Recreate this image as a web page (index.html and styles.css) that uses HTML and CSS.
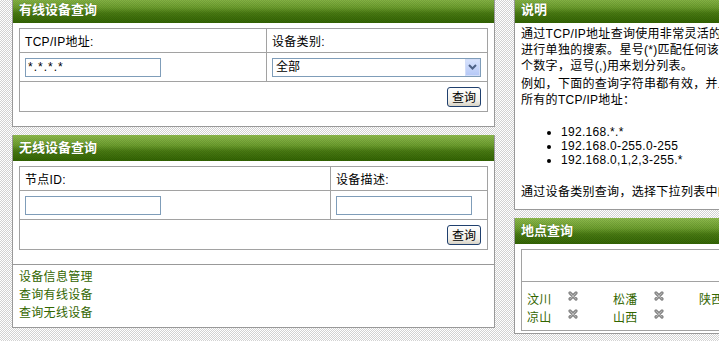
FILE: index.html
```html
<!DOCTYPE html>
<html lang="zh-CN">
<head>
    <meta charset="UTF-8">
    <title>设备查询</title>
    <link rel="stylesheet" href="styles.css">
</head>
<body>
    <div class="page">
        <div class="col-left">
            <div class="panel">
                <div class="panel-head">有线设备查询</div>
                <div class="panel-body">
                    <table class="query">
                        <tr class="row-label">
                            <td class="wired-a">TCP/IP地址:</td>
                            <td>设备类别:</td>
                        </tr>
                        <tr class="row-field">
                            <td><input class="text" type="text" value="*.*.*.*"></td>
                            <td>
                                <div class="select-box">
                                    <select class="select"><option>全部</option></select>
                                    <span class="select-arrow">
                                        <svg width="9" height="6" viewBox="0 0 9 6"><path d="M1 1L4.5 4.5L8 1" fill="none" stroke="#4d6185" stroke-width="2"/></svg>
                                    </span>
                                </div>
                            </td>
                        </tr>
                        <tr class="row-action">
                            <td colspan="2" class="actions"><button class="btn">查询</button></td>
                        </tr>
                    </table>
                </div>
            </div>

            <div class="panel">
                <div class="panel-head">无线设备查询</div>
                <div class="panel-body">
                    <table class="query">
                        <tr class="row-label">
                            <td class="wireless-a">节点ID:</td>
                            <td>设备描述:</td>
                        </tr>
                        <tr class="row-field">
                            <td><input class="text" type="text"></td>
                            <td><input class="text" type="text"></td>
                        </tr>
                        <tr class="row-action">
                            <td colspan="2" class="actions"><button class="btn">查询</button></td>
                        </tr>
                    </table>
                </div>
                <div class="links">
                    <a href="#">设备信息管理</a>
                    <a href="#">查询有线设备</a>
                    <a href="#">查询无线设备</a>
                </div>
            </div>
        </div>

        <div class="col-right">
            <div class="panel">
                <div class="panel-head">说明</div>
                <div class="panel-body help">
                    <p>通过TCP/IP地址查询使用非常灵活的方式，可以对地址的每一段<br>进行单独的搜索。星号(*)匹配任何该段的值，连字符(-)指定一个范围的<br>个数字，逗号(,)用来划分列表。</p>
                    <p>例如，下面的查询字符串都有效，并且可以匹配<br>所有的TCP/IP地址：</p>
                    <ul>
                        <li>192.168.*.*</li>
                        <li>192.168.0-255.0-255</li>
                        <li>192.168.0,1,2,3-255.*</li>
                    </ul>
                    <p class="last">通过设备类别查询，选择下拉列表中的设备类型即可。</p>
                </div>
            </div>

            <div class="panel">
                <div class="panel-head">地点查询</div>
                <div class="panel-body loc-body">
                    <table class="loc">
                        <tr><td class="loc-empty"></td></tr>
                        <tr>
                            <td class="loc-cell">
                                <div class="loc-grid">
                                    <div class="loc-item"><a href="#">汶川</a><span class="del"><svg width="10" height="10" viewBox="0 0 10 10"><path d="M2 2L8 8M8 2L2 8" stroke="#8a8a8a" stroke-width="3.2" stroke-linecap="round"/><path d="M2.5 2.5L7.5 7.5M7.5 2.5L2.5 7.5" stroke="#c4c4c4" stroke-width="0.8" stroke-linecap="round"/></svg></span></div>
                                    <div class="loc-item"><a href="#">松潘</a><span class="del"><svg width="10" height="10" viewBox="0 0 10 10"><path d="M2 2L8 8M8 2L2 8" stroke="#8a8a8a" stroke-width="3.2" stroke-linecap="round"/><path d="M2.5 2.5L7.5 7.5M7.5 2.5L2.5 7.5" stroke="#c4c4c4" stroke-width="0.8" stroke-linecap="round"/></svg></span></div>
                                    <div class="loc-item"><a href="#">陕西</a><span class="del"><svg width="10" height="10" viewBox="0 0 10 10"><path d="M2 2L8 8M8 2L2 8" stroke="#8a8a8a" stroke-width="3.2" stroke-linecap="round"/><path d="M2.5 2.5L7.5 7.5M7.5 2.5L2.5 7.5" stroke="#c4c4c4" stroke-width="0.8" stroke-linecap="round"/></svg></span></div>
                                    <div class="loc-item"><a href="#">凉山</a><span class="del"><svg width="10" height="10" viewBox="0 0 10 10"><path d="M2 2L8 8M8 2L2 8" stroke="#8a8a8a" stroke-width="3.2" stroke-linecap="round"/><path d="M2.5 2.5L7.5 7.5M7.5 2.5L2.5 7.5" stroke="#c4c4c4" stroke-width="0.8" stroke-linecap="round"/></svg></span></div>
                                    <div class="loc-item"><a href="#">山西</a><span class="del"><svg width="10" height="10" viewBox="0 0 10 10"><path d="M2 2L8 8M8 2L2 8" stroke="#8a8a8a" stroke-width="3.2" stroke-linecap="round"/><path d="M2.5 2.5L7.5 7.5M7.5 2.5L2.5 7.5" stroke="#c4c4c4" stroke-width="0.8" stroke-linecap="round"/></svg></span></div>
                                </div>
                            </td>
                        </tr>
                    </table>
                </div>
            </div>
        </div>
    </div>
</body>
</html>
```

FILE: styles.css
```css
html, body {
    margin: 0;
    padding: 0;
    overflow: hidden;
}
body {
    background: repeating-conic-gradient(#d2d2d2 0 25%, #fff 0 50%) 0 0 / 2px 2px;
    font-family: "Liberation Sans", "Noto Sans CJK SC", sans-serif;
    font-size: 12px;
    letter-spacing: 0.3px;
    color: #000;
}
.page {
    display: flex;
    gap: 19px;
    padding-left: 12px;
    margin-top: -3px;
    width: 780px;
}
.col-left {
    width: 483px;
    flex-shrink: 0;
    display: flex;
    flex-direction: column;
    gap: 8px;
}
.col-right {
    width: 250px;
    flex-shrink: 0;
    display: flex;
    flex-direction: column;
    gap: 8px;
}
.panel {
    background: #fff;
    border: 1px solid #999;
    border-top: none;
}
.panel-head {
    height: 26px;
    line-height: 26px;
    padding: 0 6px;
    color: #fff;
    font-size: 13px;
    font-weight: bold;
    letter-spacing: 0;
    text-shadow: 0 0 1px rgba(30, 60, 0, 0.6);
    background:
        repeating-conic-gradient(rgba(0, 0, 0, 0.1) 0 25%, transparent 0 50%) 0 0 / 2px 2px,
        linear-gradient(to bottom, #8fbd4e 0%, #6d9f2e 40%, #497b12 62%, #336503 100%);
}
.panel-body {
    padding: 5px 6px 14px;
}
.query {
    width: 100%;
    border-collapse: collapse;
}
.query td {
    border: 1px solid #a2a2a2;
    padding: 0 5px;
    vertical-align: middle;
}
.wired-a {
    width: 236px;
}
.wireless-a {
    width: 300px;
}
.row-label td {
    height: 23px;
}
.row-field td {
    height: 28px;
}
.row-action td {
    height: 29px;
}
.actions {
    text-align: right;
}
.query .actions {
    padding-right: 6px;
}
.text {
    box-sizing: border-box;
    width: 136px;
    height: 19px;
    border: 1px solid #7f9db9;
    padding: 0 2px;
    font: inherit;
    letter-spacing: 1px;
    display: block;
}
.select-box {
    position: relative;
    width: 209px;
    height: 19px;
}
.select {
    appearance: none;
    box-sizing: border-box;
    width: 100%;
    height: 19px;
    border: 1px solid #7f9db9;
    background: #fff;
    padding: 0 3px;
    font: inherit;
    display: block;
}
.select-arrow {
    position: absolute;
    right: 1px;
    top: 1px;
    width: 15px;
    height: 17px;
    box-sizing: border-box;
    border: 1px solid #d2ddf8;
    background: linear-gradient(#d7e2fc, #b6c9f7);
    display: flex;
    align-items: center;
    justify-content: center;
}
.btn {
    font: inherit;
    height: 20px;
    padding: 0 4px;
    border: 1px solid #20406e;
    border-radius: 3px;
    background: linear-gradient(#ffffff, #f1efe8 70%, #d8d3c6);
    color: #000;
    cursor: pointer;
}
.links {
    border-top: 1px solid #999;
    padding: 3px 6px 5px;
}
.links a {
    display: block;
    line-height: 18px;
    color: #336600;
    text-decoration: none;
}
.help {
    padding: 3px 6px 9px;
    white-space: nowrap;
    overflow: hidden;
}
.help p {
    margin: 0 0 2px;
    line-height: 16px;
}
.help p.last {
    margin-bottom: 0;
}
.help ul {
    margin: 17px 0 17px;
    padding-left: 40px;
    line-height: 14px;
}
.loc-body {
    padding: 5px 6px 2px;
}
.loc {
    width: 100%;
    border-collapse: collapse;
}
.loc td {
    border: 1px solid #a2a2a2;
}
.loc-empty {
    height: 29px;
}
.loc-cell {
    padding: 7px 5px 5px;
}
.loc-grid {
    display: grid;
    grid-template-columns: repeat(3, 86px);
}
.loc-item {
    display: flex;
    align-items: center;
    height: 18px;
    white-space: nowrap;
}
.loc-item a {
    width: 41px;
    color: #336600;
    text-decoration: none;
}
.del {
    display: flex;
    margin-top: -4px;
}
```
